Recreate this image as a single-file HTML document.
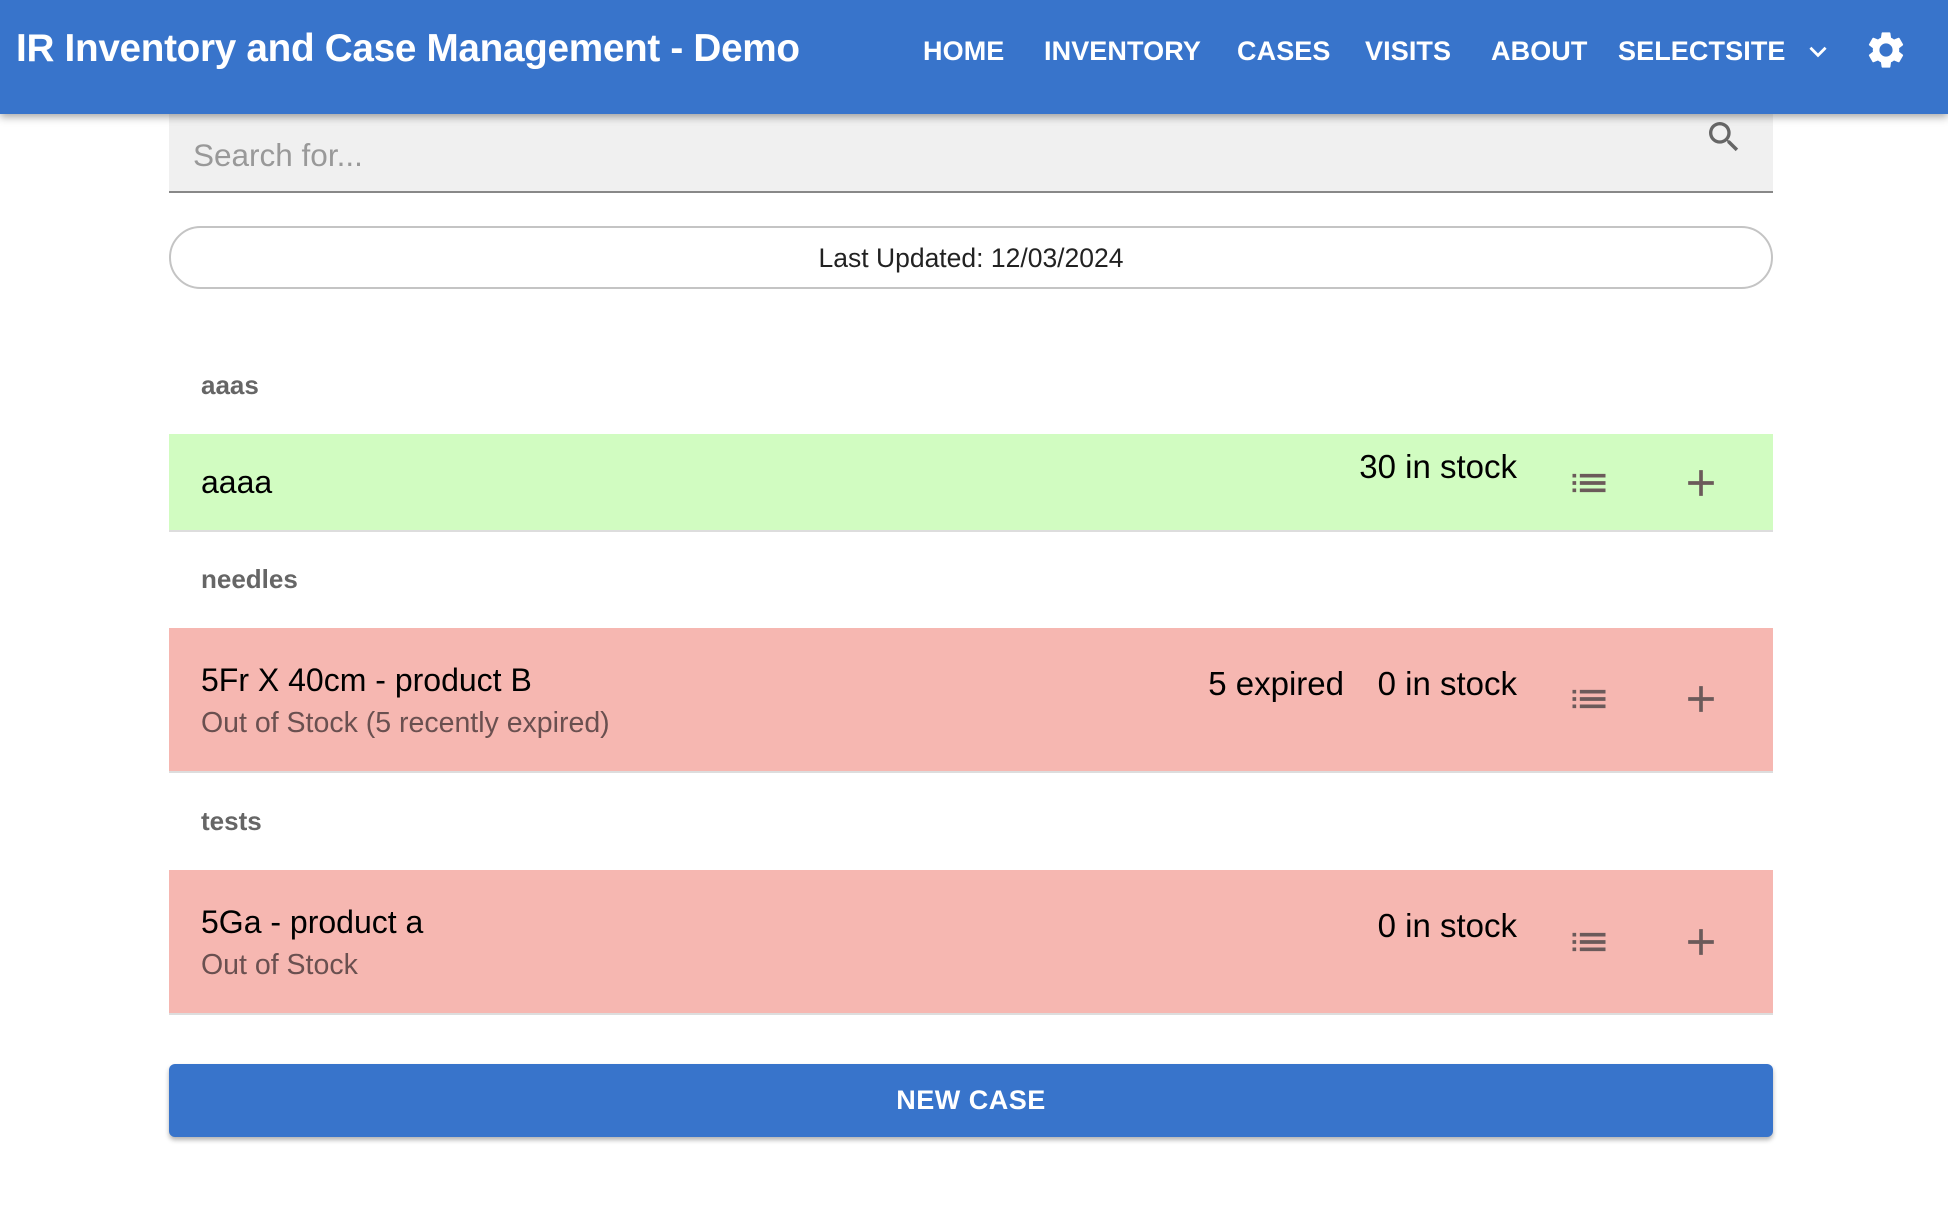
<!DOCTYPE html>
<html><head><meta charset="utf-8"><style>
*{box-sizing:border-box;margin:0;padding:0}
body{width:1948px;height:1216px;background:#fff;font-family:"Liberation Sans",sans-serif;position:relative;overflow:hidden}
.hdr{position:absolute;left:0;top:0;width:1948px;height:114px;background:#3874cb;box-shadow:0 3px 8px rgba(0,0,0,.35);z-index:2;color:#fff}
.title{position:absolute;left:16px;top:27px;font-size:38.7px;font-weight:bold;letter-spacing:-0.3px;white-space:nowrap}
.nav{position:absolute;top:36px;font-size:27px;font-weight:bold;letter-spacing:0.1px;white-space:nowrap}
.abs{position:absolute}
.search{left:169px;top:114px;width:1604px;height:79px;background:#f0f0f0;border-bottom:2px solid #888}
.ph{left:193px;top:137px;font-size:31.5px;color:#999}
.pill{left:169px;top:226px;width:1604px;height:63px;border:2px solid #c4c4c4;border-radius:32px;text-align:center;line-height:61px;font-size:26.5px;color:#222}
.sub{left:201px;font-size:26px;font-weight:bold;color:#666}
.row{left:169px;width:1604px;border-bottom:2px solid #ddd}
.t{position:absolute;left:32px;font-size:32px;color:#000}
.s{position:absolute;left:32px;font-size:28.5px;color:#6a5050}
.st{position:absolute;font-size:33px;color:#000;white-space:nowrap}
.btn{left:169px;top:1064px;width:1604px;height:73px;background:#3874cb;border-radius:6px;box-shadow:0 3px 5px rgba(0,0,0,.3);color:#fff;text-align:center;line-height:73px;font-size:27px;font-weight:bold;letter-spacing:0.5px}
</style></head><body>
<div class="hdr">
<div class="title">IR Inventory and Case Management - Demo</div>
<div class="nav" style="left:923px">HOME</div>
<div class="nav" style="left:1044px">INVENTORY</div>
<div class="nav" style="left:1237px">CASES</div>
<div class="nav" style="left:1365px">VISITS</div>
<div class="nav" style="left:1491px">ABOUT</div>
<div class="nav" style="left:1618px">SELECTSITE</div>
<svg class="abs" style="left:1805px;top:38px" width="26" height="26" viewBox="0 0 24 24"><path d="M5 9l7 7 7-7" fill="none" stroke="#fff" stroke-width="2.6"/></svg>
<svg class="abs" style="left:1864px;top:28px" width="44" height="44" viewBox="0 0 24 24"><path fill="#fff" d="M19.14 12.94c.04-.3.06-.61.06-.94 0-.32-.02-.64-.07-.94l2.030-1.58a.49.49 0 0 0 .12-.61l-1.92-3.32a.49.49 0 0 0-.59-.22l-2.39.96c-.5-.38-1.03-.7-1.62-.94l-.36-2.54a.48.48 0 0 0-.48-.41h-3.84c-.24 0-.43.17-.47.41l-.36 2.540c-.59.24-1.13.57-1.62.94l-2.39-.96a.49.49 0 0 0-.59.22L2.74 8.87c-.12.21-.08.47.12.61l2.03 1.58c-.05.3-.09.63-.09.94s.02.64.07.94l-2.03 1.58a.49.49 0 0 0-.12.61l1.92 3.32c.12.22.37.29.59.22l2.39-.96c.5.38 1.03.7 1.62.94l.36 2.54c.05.24.24.41.48.41h3.84c.24 0 .44-.17.47-.41l.36-2.54c.59-.24 1.13-.56 1.62-.94l2.39.96c.22.08.47 0 .59-.22l1.92-3.32c.12-.22.07-.47-.12-.61l-2.01-1.58zM12 15.6A3.6 3.6 0 1 1 12 8.4a3.6 3.6 0 0 1 0 7.2z"/></svg>
</div>
<div class="abs search"></div>
<div class="abs ph">Search for...</div>
<svg class="abs" style="left:1704px;top:117px" width="40" height="40" viewBox="0 0 24 24"><path fill="#666" d="M15.5 14h-.79l-.28-.27A6.47 6.47 0 0 0 16 9.5 6.5 6.5 0 1 0 9.5 16c1.61 0 3.09-.59 4.23-1.57l.27.28v.79l5 4.99L20.49 19l-4.99-5zm-6 0C7.01 14 5 11.99 5 9.5S7.01 5 9.5 5 14 7.01 14 9.5 11.99 14 9.5 14z"/></svg>
<div class="abs pill">Last Updated: 12/03/2024</div>

<div class="abs sub" style="top:370px">aaas</div>
<div class="abs row" style="top:434px;height:98px;background:#d1fcc1">
<div class="t" style="top:30px">aaaa</div>
<div class="st" style="right:256px;top:14px">30 in stock</div>
</div>
<div class="abs sub" style="top:564px">needles</div>
<div class="abs row" style="top:628px;height:145px;background:#f6b7b1">
<div class="t" style="top:34px">5Fr X 40cm - product B</div>
<div class="s" style="top:79px">Out of Stock (5 recently expired)</div>
<div class="st" style="right:429px;top:37px">5 expired</div>
<div class="st" style="right:256px;top:37px">0 in stock</div>
</div>
<div class="abs sub" style="top:806px">tests</div>
<div class="abs row" style="top:870px;height:145px;background:#f6b7b1">
<div class="t" style="top:34px">5Ga - product a</div>
<div class="s" style="top:79px">Out of Stock</div>
<div class="st" style="right:256px;top:37px">0 in stock</div>
</div>

<svg class="abs" style="left:1567px;top:461px" width="44" height="44" viewBox="0 0 24 24"><path fill="#6b5a5a" d="M3 13h2v-2H3v2zm0 4h2v-2H3v2zm0-8h2V7H3v2zm4 4h14v-2H7v2zm0 4h14v-2H7v2zM7 7v2h14V7H7z"/></svg>
<svg class="abs" style="left:1679px;top:461px" width="44" height="44" viewBox="0 0 24 24"><path fill="#6b5a5a" d="M19 13h-6v6h-2v-6H5v-2h6V5h2v6h6v2z"/></svg>
<svg class="abs" style="left:1567px;top:677px" width="44" height="44" viewBox="0 0 24 24"><path fill="#6b5a5a" d="M3 13h2v-2H3v2zm0 4h2v-2H3v2zm0-8h2V7H3v2zm4 4h14v-2H7v2zm0 4h14v-2H7v2zM7 7v2h14V7H7z"/></svg>
<svg class="abs" style="left:1679px;top:677px" width="44" height="44" viewBox="0 0 24 24"><path fill="#6b5a5a" d="M19 13h-6v6h-2v-6H5v-2h6V5h2v6h6v2z"/></svg>
<svg class="abs" style="left:1567px;top:920px" width="44" height="44" viewBox="0 0 24 24"><path fill="#6b5a5a" d="M3 13h2v-2H3v2zm0 4h2v-2H3v2zm0-8h2V7H3v2zm4 4h14v-2H7v2zm0 4h14v-2H7v2zM7 7v2h14V7H7z"/></svg>
<svg class="abs" style="left:1679px;top:920px" width="44" height="44" viewBox="0 0 24 24"><path fill="#6b5a5a" d="M19 13h-6v6h-2v-6H5v-2h6V5h2v6h6v2z"/></svg>

<div class="abs btn">NEW CASE</div>
</body></html>
